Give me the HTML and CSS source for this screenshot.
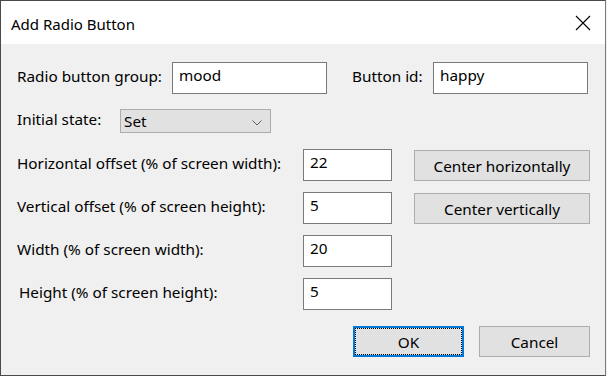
FILE: index.html
```html
<!DOCTYPE html>
<html>
<head>
    <meta charset="utf-8">
    <link rel="stylesheet" href="styles.css">
</head>
<body>
    <div class="dialog">
      <div class="titlebar">
        <span class="title">Add Radio Button</span>
        <button class="close-btn">
          <svg width="16" height="16" viewBox="0 0 16 16">
            <path d="M1 1 L15 15 M15 1 L1 15" stroke="#000" stroke-width="1.1" fill="none"/>
          </svg>
        </button>
      </div>
      <div class="content">
        <div class="row">
          <label class="lbl lbl-group">Radio button group:</label>
          <input class="field field-wide" value="mood">
          <label class="lbl lbl-id">Button id:</label>
          <input class="field field-wide" value="happy">
        </div>
        <div class="row row-state">
          <label class="lbl lbl-state">Initial state:</label>
          <div class="combo">
            <span>Set</span>
            <svg width="10" height="6" viewBox="0 0 10 6">
              <polyline points="0.5,0.5 5,5 9.5,0.5" stroke="#606060" stroke-width="1" fill="none"/>
            </svg>
          </div>
        </div>
        <div class="geometry">
          <label class="lbl">Horizontal offset (% of screen width):</label>
          <input class="field field-num" value="22">
          <button class="btn btn-center">Center horizontally</button>

          <label class="lbl">Vertical offset (% of screen height):</label>
          <input class="field field-num" value="5">
          <button class="btn btn-center">Center vertically</button>

          <label class="lbl">Width (% of screen width):</label>
          <input class="field field-num" value="20">
          <span></span>

          <label class="lbl lbl-height">Height (% of screen height):</label>
          <input class="field field-num" value="5">
          <span></span>
        </div>
        <div class="footer">
          <button class="btn btn-dlg btn-default">OK</button>
          <button class="btn btn-dlg">Cancel</button>
        </div>
      </div>
    </div>
</body>
</html>
```

FILE: styles.css
```css
* {
margin: 0;
padding: 0;
box-sizing: border-box;
font-family: "Noto Sans", sans-serif;
}

body {
background-color: #f0f0f0;
font-size: 15.3px;
line-height: 20px;
color: #000000;
}

.dialog {
width: 606px;
height: 376px;
border: 1px solid #4a4a4a;
border-right-color: #7a7a7a;
background-color: #f0f0f0;
}

.titlebar {
display: flex;
justify-content: space-between;
align-items: center;
height: 43px;
background-color: #ffffff;
padding-left: 10px;
}

.title {
font-size: 15px;
margin-top: 3px;
}

.close-btn {
display: flex;
align-items: center;
justify-content: center;
width: 46px;
height: 43px;
border: none;
background-color: transparent;
margin-right: -1px;
}

.content {
padding: 18px 15px 0 16px;
}

.row {
display: flex;
align-items: flex-start;
}

.lbl {
display: block;
padding-top: 4px;
white-space: nowrap;
}

.lbl-group {
width: 155px;
}

.lbl-id {
width: 81px;
margin-left: 25px;
}

.field {
height: 32px;
border: 1px solid #7a7a7a;
background-color: #ffffff;
padding: 2px 6px 8px;
font-size: 15.3px;
line-height: 20px;
color: #000000;
outline: none;
}

.field-wide {
width: 155px;
}

.row-state {
margin-top: 15px;
}

.lbl-state {
width: 103px;
padding-top: 0;
}

.combo {
display: flex;
justify-content: space-between;
align-items: flex-start;
width: 151px;
height: 24px;
border: 1px solid #adadad;
background-color: #e1e1e1;
padding: 1px 8px 0 3px;
}

.combo svg {
margin-top: 9px;
}

.geometry {
display: grid;
grid-template-columns: 264px 89px 176px;
grid-auto-rows: 32px;
column-gap: 22px;
row-gap: 11px;
margin-top: 16px;
}

.field-num {
width: 89px;
}

.lbl-height {
padding-left: 2px;
}

.btn {
border: 1px solid #adadad;
background-color: #e1e1e1;
font-size: 15.3px;
line-height: 20px;
color: #000000;
}

.btn-center {
height: 31px;
margin-top: 1px;
}

.footer {
display: flex;
justify-content: flex-end;
gap: 15px;
margin-top: 16px;
}

.btn-dlg {
width: 111px;
height: 31px;
}

.btn-default {
border: 2px solid #0078d7;
outline: 1px dotted #000000;
outline-offset: -3px;
}
```
